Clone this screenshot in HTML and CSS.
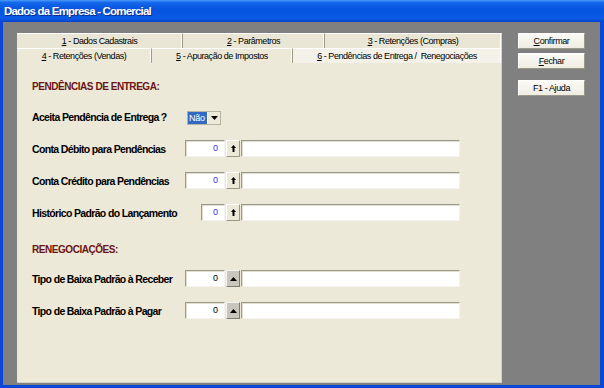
FILE: index.html
```html
<!DOCTYPE html>
<html lang="pt-BR">
<head>
  <meta charset="UTF-8" />
  <title>Dados da Empresa - Comercial</title>
  <link rel="stylesheet" href="styles.css">
</head>
<body>
  <div class="window">
    <div class="titlebar">Dados da Empresa - Comercial</div>

    <div class="client">
      <div class="tab-panel">
        <div class="tab-row">
          <div class="tab t1"><u>1</u> - Dados Cadastrais</div>
          <div class="tab t2"><u>2</u> - Parâmetros</div>
          <div class="tab t3"><u>3</u> - Retenções (Compras)</div>
        </div>
        <div class="tab-row">
          <div class="tab t4"><u>4</u> - Retenções (Vendas)</div>
          <div class="tab t5"><u>5</u> - Apuração de Impostos</div>
          <div class="tab t6 active"><u>6</u> - Pendências de Entrega /&nbsp; Renegociações</div>
        </div>

        <div class="page">
          <div class="section-title">PENDÊNCIAS DE ENTREGA:</div>

          <div class="field-row first">
            <span class="label">Aceita Pendência de Entrega ?</span>
            <div class="combo">
              <span class="combo-value">Não</span>
              <span class="combo-btn">
                <svg width="7" height="4" viewBox="0 0 7 4"><path d="M0 0h7L3.5 4z" fill="#000"/></svg>
              </span>
            </div>
          </div>

          <div class="field-row">
            <span class="label">Conta Débito para Pendências</span>
            <div class="num-input blue">0</div>
            <span class="lookup-btn">
              <svg width="5" height="7" viewBox="0 0 5 7"><path d="M2.5 0L5 3H3.5v4h-2V3H0z" fill="#000"/></svg>
            </span>
            <div class="text-input"></div>
          </div>

          <div class="field-row">
            <span class="label">Conta Crédito para Pendências</span>
            <div class="num-input blue">0</div>
            <span class="lookup-btn">
              <svg width="5" height="7" viewBox="0 0 5 7"><path d="M2.5 0L5 3H3.5v4h-2V3H0z" fill="#000"/></svg>
            </span>
            <div class="text-input"></div>
          </div>

          <div class="field-row">
            <span class="label">Histórico Padrão do Lançamento</span>
            <div class="num-input blue short">0</div>
            <span class="lookup-btn">
              <svg width="5" height="7" viewBox="0 0 5 7"><path d="M2.5 0L5 3H3.5v4h-2V3H0z" fill="#000"/></svg>
            </span>
            <div class="text-input"></div>
          </div>

          <div class="section-title second">RENEGOCIAÇÕES:</div>

          <div class="field-row after-title">
            <span class="label">Tipo de Baixa Padrão à Receber</span>
            <div class="num-input">0</div>
            <span class="lookup-btn gray">
              <svg width="7" height="4" viewBox="0 0 7 4"><path d="M3.5 0L7 4H0z" fill="#000"/></svg>
            </span>
            <div class="text-input"></div>
          </div>

          <div class="field-row">
            <span class="label">Tipo de Baixa Padrão à Pagar</span>
            <div class="num-input">0</div>
            <span class="lookup-btn gray">
              <svg width="7" height="4" viewBox="0 0 7 4"><path d="M3.5 0L7 4H0z" fill="#000"/></svg>
            </span>
            <div class="text-input"></div>
          </div>
        </div>
      </div>

      <div class="side-buttons">
        <button class="btn"><u>C</u>onfirmar</button>
        <button class="btn"><u>F</u>echar</button>
        <button class="btn help">F1 - Ajuda</button>
      </div>
    </div>
  </div>
</body>
</html>
```

FILE: styles.css
```css
:root {
  --ui-font: "Liberation Sans", Arial, sans-serif;
  --face: #ece9d8;
  --frame: #0a47d6;
  --dark-red: #6b1414;
}

html, body {
  margin: 0;
  padding: 0;
}

body {
  width: 604px;
  height: 388px;
  overflow: hidden;
  font-family: var(--ui-font);
  font-size: 10px;
  color: #000;
}

.window {
  width: 604px;
  height: 388px;
  box-sizing: border-box;
  display: flex;
  flex-direction: column;
  background: #808080;
  border-left: 3px solid var(--frame);
  border-right: 4px solid var(--frame);
  border-bottom: 3px solid var(--frame);
}

.titlebar {
  height: 22px;
  margin: 0 -4px 0 -3px;
  padding-left: 4px;
  line-height: 22px;
  font-size: 11.5px;
  font-weight: bold;
  letter-spacing: -0.8px;
  color: #fff;
  background: linear-gradient(#4a9af9 0%, #1466ea 12%, #0553de 45%, #0a5ae6 85%, #0740c8 100%);
  text-shadow: 1px 1px 0 #0a2a8a;
}

.client {
  flex: 1;
  display: flex;
  padding: 11px 0 2px 14px;
}

/* tab control */
.tab-panel {
  width: 485px;
  display: flex;
  flex-direction: column;
}

.tab-row {
  display: flex;
  height: 15px;
}

.tab {
  box-sizing: border-box;
  background: var(--face);
  border-top: 1px solid #fff;
  border-right: 1px solid #9d9a8a;
  box-shadow: inset -1px 0 0 #fff;
  text-align: center;
  line-height: 14px;
  font-size: 9px;
  letter-spacing: -0.45px;
  white-space: nowrap;
}

.tab-row:first-child .tab { background: #e9e6d5; }
.tab.t3, .tab.t6 { border-right-color: #d5d2c2; }

.tab.active {
  background: #f3f1e8;
}

.t1 { width: 166px; }
.t2 { width: 142px; }
.t3 { width: 177px; }
.t4 { width: 135px; }
.t5 { width: 141px; }
.t6 { width: 209px; }

.page {
  flex: 1;
  background: var(--face);
  padding: 17px 0 0 15px;
  border-right: 1px solid #d5d2c2;
  border-bottom: 1px solid #d5d2c2;
}

.section-title {
  height: 14px;
  line-height: 14px;
  font-size: 10px;
  font-weight: bold;
  letter-spacing: -0.45px;
  color: var(--dark-red);
}

.section-title.second {
  margin-top: 22px;
}

.field-row {
  display: flex;
  align-items: center;
  height: 17px;
  margin-top: 15px;
}

.field-row.first { margin-top: 14px; }
.field-row.after-title { margin-top: 13px; }

.label {
  width: 153px;
  flex: none;
  font-size: 10.5px;
  font-weight: bold;
  letter-spacing: -0.65px;
  white-space: nowrap;
}

/* combo box */
.combo {
  display: flex;
  align-items: stretch;
  height: 12px;
  margin: 2px 0 0 2px;
  background: #fff;
  border: 1px solid #b5b2a2;
}

.combo-value {
  width: 18px;
  background: #316ac5;
  color: #fff;
  font-size: 9px;
  letter-spacing: -0.3px;
  line-height: 12px;
  padding-left: 1px;
}

.combo-btn {
  width: 12px;
  display: flex;
  align-items: center;
  justify-content: center;
  background: var(--face);
  border-left: 1px solid #fff;
}

/* edit boxes */
.num-input,
.text-input {
  box-sizing: border-box;
  height: 17px;
  background: #fff;
  border: 1px solid;
  border-color: #9a9889 #f4f3ee #f4f3ee #9a9889;
  box-shadow: inset 1px 1px 0 #e2dfd0;
}

.num-input {
  width: 40px;
  text-align: right;
  padding-right: 6px;
  font-size: 9px;
  line-height: 15px;
}

.num-input.blue { color: #3434ee; }

.num-input.short {
  width: 24px;
  margin-left: 16px;
}

.lookup-btn {
  box-sizing: border-box;
  width: 14px;
  height: 17px;
  margin-left: 1px;
  display: flex;
  align-items: center;
  justify-content: center;
  background: var(--face);
  border: 1px solid;
  border-color: #fff #9a9889 #9a9889 #fff;
}

.lookup-btn.gray {
  background: #c9c7bd;
  border-color: #f4f3ee #7d7b70 #7d7b70 #f4f3ee;
}

.text-input {
  width: 219px;
  margin-left: 1px;
}

/* side buttons */
.side-buttons {
  width: 67px;
  margin-left: 16px;
  display: flex;
  flex-direction: column;
  gap: 4px;
}

.btn {
  height: 16px;
  padding: 0;
  font-family: var(--ui-font);
  font-size: 9px;
  letter-spacing: -0.4px;
  color: #000;
  background: linear-gradient(#fbfaf6, #eeece2);
  border: 1px solid;
  border-color: #fff #9a9889 #9a9889 #fff;
  border-radius: 1px;
}

.btn.help {
  margin-top: 7px;
}
```
